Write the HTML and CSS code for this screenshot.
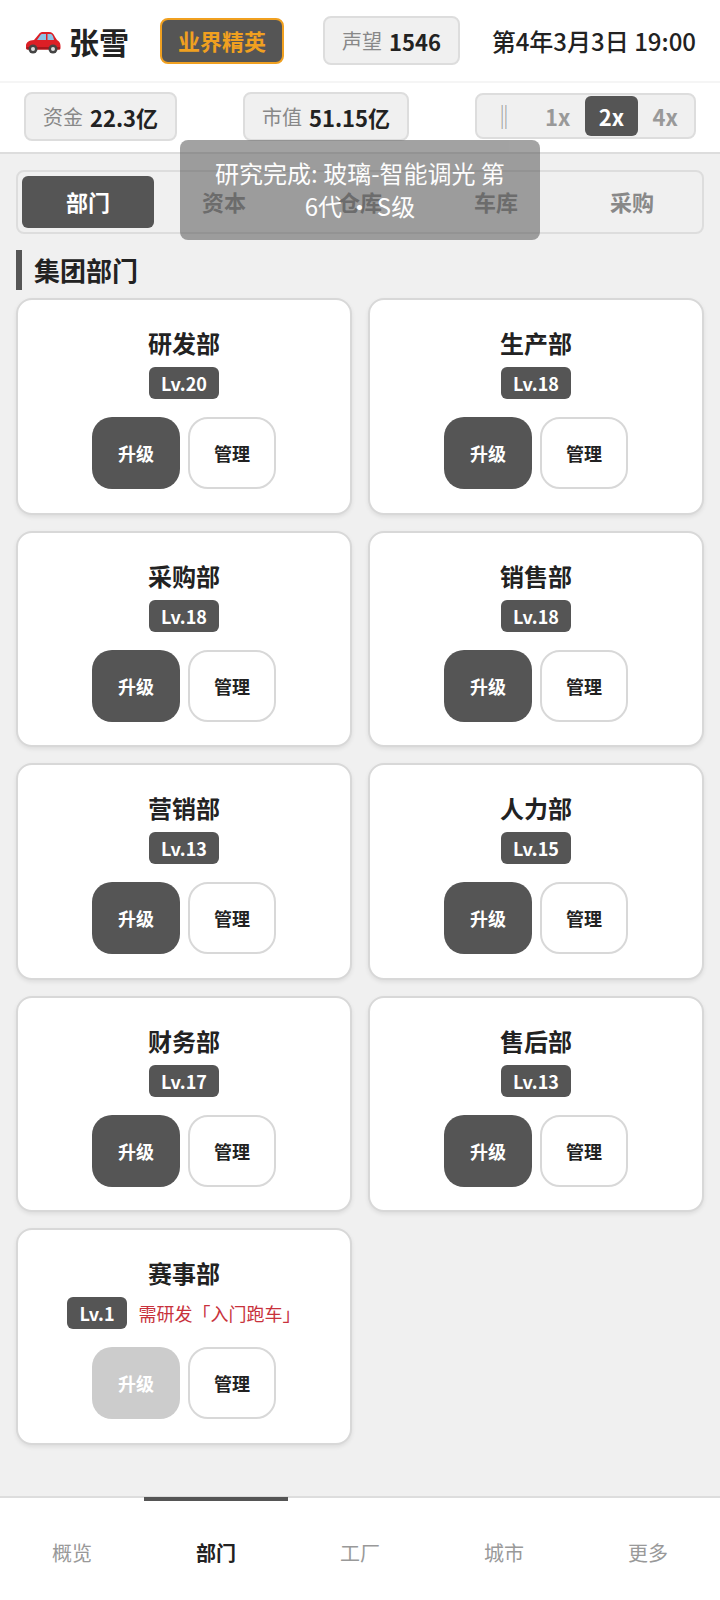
FILE: index.html
```html
<!DOCTYPE html>
<html lang="zh-CN">
<head>
    <meta charset="UTF-8">
    <meta name="viewport" content="width=device-width, initial-scale=1.0">
    <title>张雪</title>
    <link rel="stylesheet" href="styles.css">
</head>
<body>
    <div class="app">
        <!-- 顶部 -->
        <header class="top-bar">
            <div class="player">
                <svg class="car-icon" width="36" height="23" viewBox="0 0 36 23" aria-hidden="true">
                    <path d="M1 15C1 11 4 9.5 9 9l5-6c1-1.500 2.500-2 4-2h6c3 0 4.500 1.500 6 5l2 3c2 1 3.500 3 3.500 6v2c0 1-.5 1.500-1.500 1.500H3c-1.500 0-2-.5-2-1.500z" fill="#dc1f26"/>
                    <path d="M12 9l3.500-5c.5-.7 1-1 2-1H21v6zM22.500 3H25c2 0 3 1 4 6h-6.500z" fill="#8cc3e6"/>
                    <path d="M1.500 16h33.500v1.500c0 .7-.5 1-1 1H3c-1 0-1.500-.5-1.500-1z" fill="#a9161c"/>
                    <circle cx="8" cy="18" r="4.500" fill="#444"/>
                    <circle cx="8" cy="18" r="2" fill="#ddd"/>
                    <circle cx="28" cy="18" r="4.500" fill="#444"/>
                    <circle cx="28" cy="18" r="2" fill="#ddd"/>
                </svg>
                <span class="player-name">张雪</span>
            </div>
            <span class="rank-badge">业界精英</span>
            <div class="stat stat-rep"><span class="stat-label">声望</span> <b>1546</b></div>
            <span class="date">第4年3月3日 19:00</span>
        </header>

        <div class="sub-bar">
            <div class="stat stat-money"><span class="stat-label">资金</span> <b>22.3亿</b></div>
            <div class="stat stat-value"><span class="stat-label">市值</span> <b>51.15亿</b></div>
            <div class="speed">
                <span class="speed-item speed-pause">‖</span>
                <span class="speed-item">1x</span>
                <span class="speed-item active">2x</span>
                <span class="speed-item">4x</span>
            </div>
        </div>

        <main class="main">
            <div class="tabs">
                <button class="tab active">部门</button>
                <button class="tab">资本</button>
                <button class="tab">仓库</button>
                <button class="tab">车库</button>
                <button class="tab">采购</button>
            </div>

            <h2 class="section-title">集团部门</h2>

            <div class="dept-grid">
                <div class="card">
                    <div class="card-name">研发部</div>
                    <div class="card-level"><span class="level">Lv.20</span></div>
                    <div class="card-actions"><button class="btn btn-up">升级</button><button class="btn btn-manage">管理</button></div>
                </div>
                <div class="card">
                    <div class="card-name">生产部</div>
                    <div class="card-level"><span class="level">Lv.18</span></div>
                    <div class="card-actions"><button class="btn btn-up">升级</button><button class="btn btn-manage">管理</button></div>
                </div>
                <div class="card">
                    <div class="card-name">采购部</div>
                    <div class="card-level"><span class="level">Lv.18</span></div>
                    <div class="card-actions"><button class="btn btn-up">升级</button><button class="btn btn-manage">管理</button></div>
                </div>
                <div class="card">
                    <div class="card-name">销售部</div>
                    <div class="card-level"><span class="level">Lv.18</span></div>
                    <div class="card-actions"><button class="btn btn-up">升级</button><button class="btn btn-manage">管理</button></div>
                </div>
                <div class="card">
                    <div class="card-name">营销部</div>
                    <div class="card-level"><span class="level">Lv.13</span></div>
                    <div class="card-actions"><button class="btn btn-up">升级</button><button class="btn btn-manage">管理</button></div>
                </div>
                <div class="card">
                    <div class="card-name">人力部</div>
                    <div class="card-level"><span class="level">Lv.15</span></div>
                    <div class="card-actions"><button class="btn btn-up">升级</button><button class="btn btn-manage">管理</button></div>
                </div>
                <div class="card">
                    <div class="card-name">财务部</div>
                    <div class="card-level"><span class="level">Lv.17</span></div>
                    <div class="card-actions"><button class="btn btn-up">升级</button><button class="btn btn-manage">管理</button></div>
                </div>
                <div class="card">
                    <div class="card-name">售后部</div>
                    <div class="card-level"><span class="level">Lv.13</span></div>
                    <div class="card-actions"><button class="btn btn-up">升级</button><button class="btn btn-manage">管理</button></div>
                </div>
                <div class="card">
                    <div class="card-name">赛事部</div>
                    <div class="card-level"><span class="level">Lv.1</span><span class="level-note">需研发「入门跑车」</span></div>
                    <div class="card-actions"><button class="btn btn-up disabled">升级</button><button class="btn btn-manage">管理</button></div>
                </div>
            </div>
        </main>

        <!-- 底部导航 -->
        <nav class="bottom-nav">
            <div class="nav-item">概览</div>
            <div class="nav-item active">部门</div>
            <div class="nav-item">工厂</div>
            <div class="nav-item">城市</div>
            <div class="nav-item">更多</div>
        </nav>

        <!-- 提示 -->
        <div class="toast">研究完成: 玻璃-智能调光 第6代 • S级</div>
    </div>
</body>
</html>
```

FILE: styles.css
```css
* {
    box-sizing: border-box;
}
body {
    margin: 0;
    font-family: "Noto Sans CJK SC", "Noto Sans", sans-serif;
    color: #222;
    background-color: #f0f0f0;
}
button {
    font-family: inherit;
    padding: 0;
}
.app {
    position: relative;
    display: flex;
    flex-direction: column;
    height: 1600px;
    overflow: hidden;
}
.top-bar {
    display: flex;
    align-items: center;
    height: 83px;
    padding: 0 24px 0 25px;
    background-color: #fff;
    border-bottom: 2px solid #f5f5f5;
}
.player {
    display: flex;
    align-items: center;
    width: 135px;
}
.car-icon {
    margin-right: 8px;
    margin-top: 4px;
    flex-shrink: 0;
}
.player-name {
    font-size: 30px;
    line-height: 40px;
    font-weight: 700;
}
.rank-badge {
    width: 124px;
    height: 46px;
    line-height: 40px;
    text-align: center;
    font-size: 22px;
    font-weight: 700;
    color: #f0a020;
    background-color: #555;
    border: 2px solid #f0a020;
    border-radius: 8px;
}
.stat {
    display: flex;
    align-items: center;
    justify-content: center;
    gap: 7px;
    height: 49px;
    font-size: 20px;
    background-color: #f0f0f0;
    border: 2px solid #ddd;
    border-radius: 8px;
}
.stat b {
    font-weight: 700;
    font-size: 22px;
}
.stat-label {
    color: #888;
}
.stat-rep {
    width: 137px;
    margin-left: 39px;
}
.date {
    margin-left: auto;
    font-size: 24px;
    font-weight: 500;
    white-space: nowrap;
}
.sub-bar {
    display: flex;
    align-items: flex-start;
    height: 71px;
    padding: 9px 24px 0;
    background-color: #fff;
    border-bottom: 2px solid #ddd;
}
.stat-money {
    width: 153px;
}
.stat-value {
    width: 166px;
    margin-left: 66px;
}
.speed {
    display: flex;
    align-items: center;
    justify-content: center;
    width: 221px;
    height: 46px;
    margin-left: auto;
    margin-top: 1px;
    padding-right: 2px;
    background-color: #f0f0f0;
    border: 2px solid #ddd;
    border-radius: 8px;
}
.speed-item {
    width: 54px;
    height: 40px;
    line-height: 40px;
    text-align: center;
    font-size: 22px;
    font-weight: 700;
    color: #999;
    border-radius: 6px;
}
.speed-pause {
    font-size: 24px;
    font-weight: 400;
}
.speed-item.active {
    color: #fff;
    background-color: #555;
}
.main {
    flex: 1;
    padding: 16px 16px 0;
}
.tabs {
    display: flex;
    gap: 4px;
    height: 64px;
    padding: 4px;
    border: 2px solid #ddd;
    border-radius: 8px;
}
.tab {
    flex: 1;
    padding-bottom: 2px;
    border: none;
    border-radius: 6px;
    font-size: 22px;
    font-weight: 700;
    color: #888;
    background: none;
}
.tab.active {
    color: #fff;
    background-color: #555;
}
.section-title {
    height: 40px;
    margin: 16px 0 8px;
    padding-left: 12px;
    line-height: 40px;
    font-size: 26px;
    font-weight: 700;
    border-left: 6px solid #555;
}
.dept-grid {
    display: grid;
    grid-template-columns: 1fr 1fr;
    gap: 16px;
}
.card {
    height: 216.5px;
    padding: 25px 0 0;
    text-align: center;
    background-color: #fff;
    border: 2px solid #d8d8d8;
    border-radius: 16px;
    box-shadow: 0 2px 4px rgba(0, 0, 0, 0.08);
}
.card-name {
    height: 36px;
    line-height: 36px;
    font-size: 24px;
    font-weight: 700;
}
.card-level {
    display: flex;
    align-items: center;
    justify-content: center;
    gap: 12px;
    height: 32px;
    margin-top: 6px;
}
.level {
    height: 32px;
    padding: 0 12px;
    line-height: 32px;
    font-size: 18px;
    font-weight: 700;
    color: #fff;
    background-color: #555;
    border-radius: 6px;
}
.level-note {
    font-size: 18px;
    color: #c8323c;
}
.card-actions {
    display: flex;
    justify-content: center;
    gap: 8px;
    margin-top: 18px;
}
.btn {
    width: 88px;
    height: 72px;
    font-size: 18px;
    font-weight: 700;
    border-radius: 20px;
}
.btn-up {
    color: #fff;
    background-color: #555;
    border: none;
}
.btn-up.disabled {
    background-color: #ccc;
}
.btn-manage {
    color: #222;
    background-color: #fff;
    border: 2px solid #d8d8d8;
}
.bottom-nav {
    display: flex;
    height: 104px;
    background-color: #fff;
    border-top: 2px solid #ddd;
}
.nav-item {
    position: relative;
    flex: 1;
    padding-top: 39px;
    line-height: 32px;
    text-align: center;
    font-size: 20px;
    color: #999;
}
.nav-item.active {
    font-weight: 700;
    color: #222;
}
.nav-item.active::before {
    content: "";
    position: absolute;
    top: -1px;
    left: 0;
    right: 0;
    height: 4px;
    background-color: #555;
}
.toast {
    position: absolute;
    top: 140px;
    left: 180px;
    width: 360px;
    padding: 16px 32px 18px;
    line-height: 33px;
    text-align: center;
    font-size: 24px;
    color: #fff;
    background-color: rgba(85, 85, 85, 0.6);
    border-radius: 8px;
    opacity: 0.9;
}
```
